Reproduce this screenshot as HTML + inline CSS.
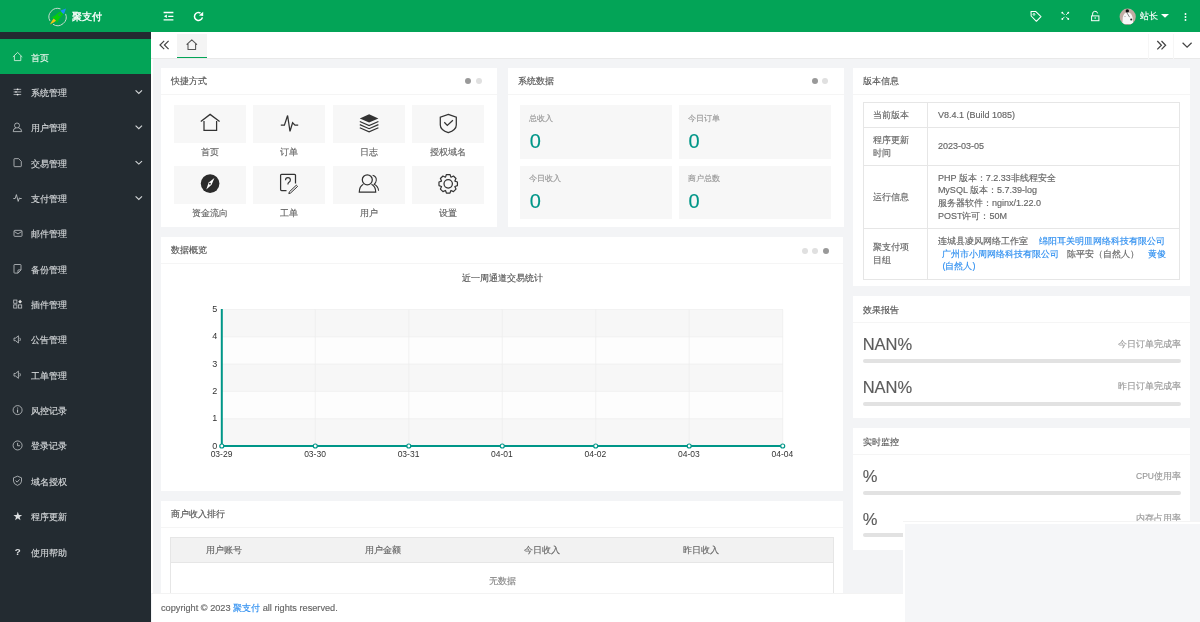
<!DOCTYPE html>
<html><head><meta charset="utf-8">
<style>
*{box-sizing:border-box;margin:0;padding:0}
html,body{width:1200px;height:622px;overflow:hidden}
body{position:relative;background:#f3f4f6;font-family:"Liberation Sans",sans-serif;color:#333}
.a{position:absolute}
.t{position:absolute;white-space:nowrap;line-height:1}
#root{-webkit-text-stroke:0.15px currentColor}
#hdr{left:0;top:0;width:1200px;height:32px;background:#03a457}
#side{left:0;top:32px;width:151px;height:590px;background:#232b31}
.mi{position:absolute;left:0;width:151px;height:35.3px}
.mi .t{left:31px;top:14.5px;font-size:9px;color:#d3d6d8}
.mi svg{position:absolute;left:12px;top:12px}
.mi .chev{left:135px;top:14px}
#tabs{left:151px;top:32px;width:1049px;height:27.3px;background:#fff;border-bottom:1px solid #e9e9e9}
.card{position:absolute;background:#fff}
.card .hd{position:absolute;left:0;top:0;right:0;height:27px;border-bottom:1px solid #f5f5f5}
.card .hd .t{left:10px;top:9.5px;font-size:9px;color:#555}
.dot{position:absolute;width:6px;height:6px;border-radius:50%;background:#e0e0e0}
.dot.on{background:#999}
.sc{position:absolute;width:72.3px;height:38px;background:#f7f7f7}
.sc svg{position:absolute}
.scl{position:absolute;font-size:9px;color:#666;line-height:1;white-space:nowrap;text-align:center;width:72.5px}
.st{position:absolute;width:152px;height:53.5px;background:#f7f7f7}
.st .l{position:absolute;left:9px;top:9.8px;font-size:7.6px;color:#999;line-height:1;white-space:nowrap}
.st .n{position:absolute;left:9.5px;top:25.5px;font-size:20px;color:#009688;line-height:1}
table.ver{position:absolute;border-collapse:collapse;font-size:9px;color:#666}
table.ver td{border:1px solid #e6e6e6;padding:0 10px 0 9.5px;line-height:12.8px}
table.ver td:first-child{padding-left:8.5px}
.bl{color:#2f8ff0}
.bar{position:absolute;height:4px;border-radius:2px;background:#e2e2e2}
</style></head><body><div id="root" style="position:absolute;left:0;top:0;width:1200px;height:622px;will-change:transform;background:#f3f4f6">
<!-- header -->
<div id="hdr" class="a">
  <svg class="a" style="left:0;top:0" width="80" height="32" viewBox="0 0 80 32">
    <path d="M65.6 13.9A8.6 8.6 0 0 1 53 24.3M49.9 20.9A8.6 8.6 0 0 1 60.5 8.9" fill="none" stroke="#c6dccd" stroke-width="1"/>
    <g transform="translate(58.1 16.4) rotate(45)">
      <path d="M0 -6.5C2.2 -6 2.6 -3 2.5 1L4 5.8L1.8 4.4L-1.8 4.4L-4 5.8L-2.5 1C-2.6 -3 -2.2 -6 0 -6.5Z" fill="#08cf0a"/>
      <path d="M0 -11.3L2.5 -5.8Q0 -4.8 -2.5 -5.8Z" fill="#1b8ff5"/>
      <circle cx="0" cy="-2" r="1.3" fill="#12a85a"/>
      <path d="M-1.7 4.6L1.7 4.6Q1.3 8 0 11.6Q-1.3 8 -1.7 4.6Z" fill="#f3c515"/>
    </g>
  </svg>
  <div class="t" style="left:72px;top:11.5px;font-size:10px;color:#fff;-webkit-text-stroke:0.35px #fff">聚支付</div>
  <!-- fold icon -->
  <svg class="a" style="left:0;top:0" width="220" height="32" viewBox="0 0 220 32">
    <path d="M163.6 12.5H173.4M168.2 16.3H173.4M163.6 19.9H173.4" stroke="#fff" stroke-width="1.3" fill="none"/>
    <path d="M166.9 14.6L163.9 16.3L166.9 18Z" fill="#fff"/>
    <path d="M202.4 17.3A4 4 0 1 1 200.5 13" stroke="#fff" stroke-width="1.5" fill="none"/>
    <path d="M203.2 11.7V16.1L198.9 15.4Z" fill="#fff"/>
  </svg>
  <!-- tag -->
  <svg class="a" style="left:1020px;top:0" width="90" height="32" viewBox="1020 0 90 32">
    <path d="M1031 11.6L1035.6 11.4L1041 16.6L1036.4 21.3L1031.2 16Z" stroke="#fff" stroke-width="1.05" fill="none" stroke-linejoin="round"/>
    <circle cx="1034" cy="14.4" r="0.9" stroke="#fff" stroke-width="0.9" fill="none"/>
    <path d="M1062.3 12.7l2.2 2.2M1068.3 12.7l-2.2 2.2M1062.3 19l2.2-2.2M1068.3 19l-2.2-2.2" stroke="#fff" stroke-width="0.9"/>
    <circle cx="1062.3" cy="12.7" r="0.9" fill="#fff"/><circle cx="1068.3" cy="12.7" r="0.9" fill="#fff"/>
    <circle cx="1062.3" cy="19" r="0.9" fill="#fff"/><circle cx="1068.3" cy="19" r="0.9" fill="#fff"/>
    <path d="M1092.6 15.8V14.2A2.5 2.5 0 0 1 1097.6 13.4" stroke="#fff" stroke-width="1" fill="none"/>
    <rect x="1091.6" y="15.9" width="7.3" height="4.8" stroke="#fff" stroke-width="1" fill="none"/>
    <circle cx="1095.2" cy="18" r="0.75" fill="#fff"/>
  </svg>
  <!-- avatar -->
  <svg class="a" style="left:1110px;top:0" width="30" height="32" viewBox="1110 0 30 32">
    <defs><clipPath id="avc"><circle cx="1127.7" cy="16.7" r="8.1"/></clipPath></defs>
    <circle cx="1127.7" cy="16.7" r="8.1" fill="#c2aca3"/>
    <g clip-path="url(#avc)">
      <path d="M1122.3 26L1122.8 17.5Q1123.5 12.6 1127.5 12.2Q1131.8 12.6 1132.6 17.5L1133.2 26Z" fill="#f7f7f7"/>
      <path d="M1122 24.2H1133.5V26H1122Z" fill="#7a5a4a"/>
    </g>
    <circle cx="1127.3" cy="10.9" r="1.7" fill="#111"/>
    <path d="M1126.8 12.6L1129.6 17.2" stroke="#333" stroke-width="0.6"/>
    <circle cx="1131.2" cy="19.6" r="1" fill="#222"/>
    <circle cx="1125" cy="16.5" r="0.6" fill="#999"/>
  </svg>
  <div class="t" style="left:1140px;top:12px;font-size:9px;color:#fff">站长</div>
  <svg class="a" style="left:1160.5px;top:14px" width="8" height="4" viewBox="0 0 8 4"><path d="M0 0H8L4 3.8Z" fill="#fff"/></svg>
  <svg class="a" style="left:1183.5px;top:12.5px" width="3" height="8" viewBox="0 0 3 8"><circle cx="1.5" cy="1" r="0.95" fill="#fff"/><circle cx="1.5" cy="4" r="0.95" fill="#fff"/><circle cx="1.5" cy="7" r="0.95" fill="#fff"/></svg>
</div>

<!-- sidebar -->
<div id="side" class="a">
<div class="a" style="left:0;top:6.8px;width:151px;height:35.3px;background:#03a457"></div>
<div class="t" style="left:31px;top:21.60px;font-size:9px;color:#e6f4ea">首页</div>
<div class="t" style="left:31px;top:56.95px;font-size:9px;color:#d3d6d8">系统管理</div>
<div class="t" style="left:31px;top:92.30px;font-size:9px;color:#d3d6d8">用户管理</div>
<div class="t" style="left:31px;top:127.65px;font-size:9px;color:#d3d6d8">交易管理</div>
<div class="t" style="left:31px;top:163.00px;font-size:9px;color:#d3d6d8">支付管理</div>
<div class="t" style="left:31px;top:198.35px;font-size:9px;color:#d3d6d8">邮件管理</div>
<div class="t" style="left:31px;top:233.70px;font-size:9px;color:#d3d6d8">备份管理</div>
<div class="t" style="left:31px;top:269.05px;font-size:9px;color:#d3d6d8">插件管理</div>
<div class="t" style="left:31px;top:304.40px;font-size:9px;color:#d3d6d8">公告管理</div>
<div class="t" style="left:31px;top:339.75px;font-size:9px;color:#d3d6d8">工单管理</div>
<div class="t" style="left:31px;top:375.10px;font-size:9px;color:#d3d6d8">风控记录</div>
<div class="t" style="left:31px;top:410.45px;font-size:9px;color:#d3d6d8">登录记录</div>
<div class="t" style="left:31px;top:445.80px;font-size:9px;color:#d3d6d8">域名授权</div>
<div class="t" style="left:31px;top:481.15px;font-size:9px;color:#d3d6d8">程序更新</div>
<div class="t" style="left:31px;top:516.50px;font-size:9px;color:#d3d6d8">使用帮助</div>
</div>
<svg class="a" style="left:0;top:0" width="151" height="622" viewBox="0 0 151 622"><path d="M12.9 57.00L17.6 52.40L22.3 57.00M14.4 55.80V60.60H20.8V55.80" stroke="#d9efe0" stroke-width="0.85" fill="none"/><path d="M13.6 89.35H21.2M13.6 91.95H21.2M13.6 94.55H21.2" stroke="#c3c6c9" stroke-width="0.8"/><circle cx="17.6" cy="89.35" r="0.9" fill="#e8e8e8"/><circle cx="16" cy="91.95" r="0.9" fill="#c3c6c9"/><circle cx="17.6" cy="94.55" r="0.9" fill="#e8e8e8"/><circle cx="17" cy="125.50" r="2.5" stroke="#c3c6c9" stroke-width="0.8" fill="none"/><path d="M13.2 131.60Q13.2 128.20 16 127.90M18.4 127.90Q21.6 128.20 21.7 131.60H13.2" stroke="#c3c6c9" stroke-width="0.8" fill="none"/><path d="M14.6 158.65H18.6L21.3 161.35V166.05Q21.3 166.65 20.7 166.65H14.6Q14 166.65 14 166.05V159.25Q14 158.65 14.6 158.65Z" stroke="#c3c6c9" stroke-width="0.8" fill="none"/><path d="M13.3 198.50H15.2L16.4 194.60L18.2 201.40L19.4 198.00L20 198.50H21.7" stroke="#c3c6c9" stroke-width="0.85" fill="none"/><rect x="14" y="230.35" width="8" height="6" rx="0.8" stroke="#c3c6c9" stroke-width="0.8" fill="none"/><path d="M14.4 231.55L18 233.95L21.6 231.55" stroke="#c3c6c9" stroke-width="0.8" fill="none"/><path d="M14.6 264.50H20.4Q21 264.50 21 265.10V269.90L18 273.10H14.6Q14 273.10 14 272.50V265.10Q14 264.50 14.6 264.50Z M18 273.10V270.30Q18 269.90 18.4 269.90H21" stroke="#c3c6c9" stroke-width="0.8" fill="none"/><rect x="13.7" y="300.05" width="3.2" height="3.2" stroke="#c3c6c9" stroke-width="0.8" fill="none"/><rect x="13.7" y="304.85" width="3.2" height="3.2" stroke="#c3c6c9" stroke-width="0.8" fill="none"/><rect x="18.5" y="304.85" width="3.2" height="3.2" stroke="#c3c6c9" stroke-width="0.8" fill="none"/><path d="M20.1 299.65L22 301.65L20.1 303.55L18.2 301.65Z" fill="#e0e0e0"/><path d="M14 338.10H15.6L18.4 335.80V343.00L15.6 340.70H14Z" stroke="#c3c6c9" stroke-width="0.8" fill="none"/><path d="M19.8 337.80Q21 339.40 19.8 341.00" stroke="#c3c6c9" stroke-width="0.8" fill="none"/><path d="M14 373.45H15.6L18.4 371.15V378.35L15.6 376.05H14Z" stroke="#c3c6c9" stroke-width="0.8" fill="none"/><path d="M19.8 373.15Q21 374.75 19.8 376.35" stroke="#c3c6c9" stroke-width="0.8" fill="none"/><circle cx="17.6" cy="410.10" r="4.5" stroke="#c3c6c9" stroke-width="0.8" fill="none"/><path d="M17.6 409.50V412.70" stroke="#c3c6c9" stroke-width="1"/><circle cx="17.6" cy="408.00" r="0.6" fill="#c3c6c9"/><circle cx="17.6" cy="445.45" r="4.5" stroke="#c3c6c9" stroke-width="0.8" fill="none"/><path d="M17.6 442.85V445.75H20" stroke="#c3c6c9" stroke-width="0.85" fill="none"/><path d="M17.5 476.20L21.5 477.80V481.20Q21.5 484.00 17.5 485.40Q13.5 484.00 13.5 481.20V477.80Z" stroke="#c3c6c9" stroke-width="0.8" fill="none"/><path d="M15.6 480.60L17.2 482.10L19.6 479.40" stroke="#c3c6c9" stroke-width="0.85" fill="none"/><path d="M17.80 511.85L18.92 514.91L22.17 515.03L19.61 517.04L20.50 520.17L17.80 518.35L15.10 520.17L15.99 517.04L13.43 515.03L16.68 514.91Z" fill="#dcdfe1"/><text x="17.8" y="555.40" font-family="Liberation Sans" font-weight="bold" font-size="9.8" fill="#dcdfe1" text-anchor="middle">?</text><path d="M135.6 90.35L138.8 93.35L142 90.35" stroke="#d3d6d8" stroke-width="1.15" fill="none"/><path d="M135.6 125.70L138.8 128.70L142 125.70" stroke="#d3d6d8" stroke-width="1.15" fill="none"/><path d="M135.6 161.05L138.8 164.05L142 161.05" stroke="#d3d6d8" stroke-width="1.15" fill="none"/><path d="M135.6 196.40L138.8 199.40L142 196.40" stroke="#d3d6d8" stroke-width="1.15" fill="none"/></svg>

<div class="a" style="left:151px;top:59px;width:2.2px;height:534px;background:#fff"></div>
<!-- tabs -->
<div id="tabs" class="a">
  <div class="a" style="left:26.3px;top:2px;width:29.5px;height:24.3px;background:#f4f4f4;border-bottom:1.5px solid #03a457"></div>
  <div class="a" style="left:996.6px;top:2px;width:1px;height:25px;background:#f6f6f6"></div>
  <div class="a" style="left:1021.7px;top:2px;width:1px;height:25px;background:#f6f6f6"></div>
</div>
<svg class="a" style="left:0;top:0" width="1200" height="60" viewBox="0 0 1200 60">
  <path d="M164.2 40.8L160 45L164.2 49.2M168.6 40.8L164.4 45L168.6 49.2" stroke="#444" stroke-width="1.2" fill="none"/>
  <path d="M186.6 44.6L191.8 39.9L197 44.6M188 43.4V49.4H195.6V43.4" stroke="#555" stroke-width="1.05" fill="none" stroke-linejoin="round"/>
  <path d="M1157.3 41L1161.4 45.2L1157.3 49.4M1161.5 41L1165.6 45.2L1161.5 49.4" stroke="#444" stroke-width="1.25" fill="none"/>
  <path d="M1182.6 42.8L1187.1 47.2L1191.6 42.8" stroke="#444" stroke-width="1.2" fill="none"/>
</svg>

<!-- card 1 shortcuts -->
<div class="card" style="left:161px;top:67.5px;width:336px;height:159px">
  <div class="hd"><div class="t">快捷方式</div></div>
  <div class="dot on" style="left:304.4px;top:10.7px"></div>
  <div class="dot" style="left:314.9px;top:10.7px"></div>
  <div class="sc" style="left:13px;top:37.5px"></div>
  <div class="sc" style="left:92px;top:37.5px"></div>
  <div class="sc" style="left:172px;top:37.5px"></div>
  <div class="sc" style="left:251px;top:37.5px"></div>
  <div class="sc" style="left:13px;top:98px"></div>
  <div class="sc" style="left:92px;top:98px"></div>
  <div class="sc" style="left:172px;top:98px"></div>
  <div class="sc" style="left:251px;top:98px"></div>
  <div class="scl" style="left:13px;top:80.5px">首页</div>
  <div class="scl" style="left:92px;top:80.5px">订单</div>
  <div class="scl" style="left:172px;top:80.5px">日志</div>
  <div class="scl" style="left:251px;top:80.5px">授权域名</div>
  <div class="scl" style="left:13px;top:141.5px">资金流向</div>
  <div class="scl" style="left:92px;top:141.5px">工单</div>
  <div class="scl" style="left:172px;top:141.5px">用户</div>
  <div class="scl" style="left:251px;top:141.5px">设置</div>
</div>


<svg class="a" style="left:0;top:0" width="1200" height="622" viewBox="0 0 1200 622">
 <g stroke="#333" stroke-width="1.25" fill="none" stroke-linejoin="miter">
  <path d="M200.8 121.6L210.1 114.4L219.6 121.6M204 121V130.3H216.6V121"/>
  <path d="M280.8 125.2H284.4L287.6 115.5L290 131.3L292.6 122.8L295 125.2H298.2"/>
  <path d="M359.8 121.5L369.1 125.6L378.4 121.5M359.8 124.6L369.1 128.7L378.4 124.6M359.8 127.7L369.1 131.8L378.4 127.7" stroke-width="1.2"/>
  <path d="M448.3 114.3L456.3 117.2V125Q456.3 130 448.3 132.6Q440.3 130 440.3 125V117.2Z"/>
  <path d="M444.3 122.3L447.3 125.4L452.9 120.2"/>
  <path d="M286.5 190.5H281.6Q280.6 190.5 280.6 189.5V175.2Q280.6 174.3 281.6 174.3H294.5Q295.5 174.3 295.5 175.2V183.4"/>
  <path d="M297.6 186.4L290.6 193L288.8 193.6L289.4 191.8L296.3 185.2Z" stroke-width="1"/>
  <path d="M285.5 180.3Q285.5 177.6 288 177.6Q290.4 177.6 290.4 180Q290.4 181.6 288.7 182.5Q287.9 183 287.9 184.6" stroke-width="1.15"/>
  <circle cx="367.3" cy="179.8" r="5"/>
  <path d="M363.3 184.3Q359.3 186.5 359.3 192.2H375.7Q375.7 186.5 371.5 184.3"/>
  <path d="M372.6 175.3Q376.6 176.5 376.3 180.3Q376 183 374.2 184.3Q378.2 186.3 378.6 190.8" stroke-width="1.05"/>
  <circle cx="448.2" cy="183.8" r="4.2"/>
 </g>
 <path d="M359.8 118.4L369.1 114.3L378.4 118.4L369.1 122.6Z" fill="#333"/>
 <circle cx="210.1" cy="183.6" r="9.3" fill="#2b2b2b"/>
 <path d="M214.4 178L211.6 184.8L206.3 189.4L208.7 182.6Z" fill="#fff"/>
 <circle cx="209.9" cy="183.7" r="0.9" fill="#2b2b2b"/>
 <path id="gear" fill="none" stroke="#333" stroke-width="1.2" stroke-linejoin="round" d="M454.88 181.10 L457.43 182.01 L457.43 185.59 L454.88 186.50 L454.83 186.61 L455.99 189.06 L453.46 191.59 L451.01 190.43 L450.90 190.48 L449.99 193.03 L446.41 193.03 L445.50 190.48 L445.39 190.43 L442.94 191.59 L440.41 189.06 L441.57 186.61 L441.52 186.50 L438.97 185.59 L438.97 182.01 L441.52 181.10 L441.57 180.99 L440.41 178.54 L442.94 176.01 L445.39 177.17 L445.50 177.12 L446.41 174.57 L449.99 174.57 L450.90 177.12 L451.01 177.17 L453.46 176.01 L455.99 178.54 L454.83 180.99Z"/>
</svg>

<!-- card 2 system data -->
<div class="card" style="left:507.5px;top:67.5px;width:336px;height:159px">
  <div class="hd"><div class="t">系统数据</div></div>
  <div class="dot on" style="left:304.4px;top:10.7px"></div>
  <div class="dot" style="left:314.9px;top:10.7px"></div>
  <div class="st" style="left:12.7px;top:37.5px"><div class="l">总收入</div><div class="n">0</div></div>
  <div class="st" style="left:171.5px;top:37.5px"><div class="l">今日订单</div><div class="n">0</div></div>
  <div class="st" style="left:12.7px;top:98px"><div class="l">今日收入</div><div class="n">0</div></div>
  <div class="st" style="left:171.5px;top:98px"><div class="l">商户总数</div><div class="n">0</div></div>
</div>

<!-- card 3 version -->
<div class="card" style="left:852.7px;top:67.5px;width:337.3px;height:218px">
  <div class="hd"><div class="t">版本信息</div></div>
  <table class="ver" style="left:10.5px;top:34.5px;width:317px">
    <tr style="height:25.3px"><td style="width:64.2px">当前版本</td><td>V8.4.1 (Build 1085)</td></tr>
    <tr style="height:38px"><td>程序更新<br>时间</td><td>2023-03-05</td></tr>
    <tr style="height:62.8px"><td>运行信息</td><td>PHP 版本：7.2.33非线程安全<br>MySQL 版本：5.7.39-log<br>服务器软件：nginx/1.22.0<br>POST许可：50M</td></tr>
    <tr style="height:51px"><td>聚支付项<br>目组</td><td style="white-space:nowrap">连城县凌风网络工作室<span class="bl" style="margin-left:11px">绵阳耳关明皿网络科技有限公司</span><br><span class="bl" style="margin-left:4.6px">广州市小周网络科技有限公司</span><span style="margin-left:7.7px">陈平安（自然人）</span><span class="bl" style="margin-left:9px">黄俊</span><br><span class="bl" style="margin-left:4.6px">(自然人)</span></td></tr>
  </table>
</div>

<!-- card chart -->
<div class="card" style="left:161px;top:237px;width:682.3px;height:254px">
  <div class="hd" style="height:26.5px"><div class="t" style="top:9px">数据概览</div></div>
  <div class="dot" style="left:641px;top:10.7px"></div>
  <div class="dot" style="left:651.3px;top:10.7px"></div>
  <div class="dot on" style="left:661.6px;top:10.7px"></div>
  <div class="t" style="left:301px;top:37px;font-size:9px;color:#555">近一周通道交易统计</div>
</div>
<svg class="a" style="left:0;top:0" width="1200" height="622" viewBox="0 0 1200 622">
  <g fill="#f7f7f7">
    <rect x="222" y="309.5" width="561" height="27.3"/>
    <rect x="222" y="364.1" width="561" height="27.3"/>
    <rect x="222" y="418.7" width="561" height="27.3"/>
  </g>
  <g fill="#fdfdfd">
    <rect x="222" y="336.8" width="561" height="27.3"/>
    <rect x="222" y="391.4" width="561" height="27.3"/>
  </g>
  <g stroke="#eeeeee" stroke-width="0.7">
    <path d="M222 336.8H783M222 364.1H783M222 391.4H783M222 418.7H783M222 309.5H783"/>
    <path d="M315.3 309.5V446M408.8 309.5V446M502.3 309.5V446M595.7 309.5V446M689.2 309.5V446M782.7 309.5V446"/>
  </g>
  <path d="M221.8 309V446H782.7" stroke="#009688" stroke-width="2" fill="none"/>
  <g fill="#fff" stroke="#009688" stroke-width="1.2">
    <circle cx="221.8" cy="446" r="2"/><circle cx="315.3" cy="446" r="2"/><circle cx="408.8" cy="446" r="2"/><circle cx="502.3" cy="446" r="2"/><circle cx="595.7" cy="446" r="2"/><circle cx="689.2" cy="446" r="2"/><circle cx="782.7" cy="446" r="2"/>
  </g>
  <g font-family="Liberation Sans" font-size="9" fill="#333" text-anchor="end"><text x="217.3" y="448.6">0</text><text x="217.3" y="421.3">1</text><text x="217.3" y="394.0">2</text><text x="217.3" y="366.6">3</text><text x="217.3" y="339.3">4</text><text x="217.3" y="312.0">5</text></g>
  <g font-family="Liberation Sans" font-size="8.5" fill="#333" text-anchor="middle"><text x="221.5" y="457.4">03-29</text><text x="315.0" y="457.4">03-30</text><text x="408.5" y="457.4">03-31</text><text x="501.9" y="457.4">04-01</text><text x="595.4" y="457.4">04-02</text><text x="688.9" y="457.4">04-03</text><text x="782.4" y="457.4">04-04</text></g>
</svg>

<!-- card 4 ranking -->
<div class="card" style="left:161px;top:500.5px;width:682.3px;height:100px">
  <div class="hd"><div class="t" style="top:9px">商户收入排行</div></div>
  <div class="a" style="left:9.4px;top:36.9px;width:663.4px;height:25.4px;background:#f2f2f2;border:1px solid #e6e6e6"></div>
  <div class="a" style="left:9.4px;top:62.3px;width:663.4px;height:40px;border:1px solid #e6e6e6;border-top:none"></div>
  <div class="t" style="left:44.8px;top:45.3px;font-size:9px;color:#666">用户账号</div>
  <div class="t" style="left:203.8px;top:45.3px;font-size:9px;color:#666">用户金额</div>
  <div class="t" style="left:362.8px;top:45.3px;font-size:9px;color:#666">今日收入</div>
  <div class="t" style="left:521.8px;top:45.3px;font-size:9px;color:#666">昨日收入</div>
  <div class="t" style="left:328px;top:76.5px;font-size:9px;color:#888">无数据</div>
</div>

<!-- card effect -->
<div class="card" style="left:852.7px;top:296px;width:337.3px;height:122.2px">
  <div class="hd"><div class="t">效果报告</div></div>
  <div class="t" style="left:10px;top:40px;font-size:16.5px;color:#5c5c5c">NAN%</div>
  <div class="t" style="right:9px;top:44px;font-size:8.5px;color:#999">今日订单完成率</div>
  <div class="bar" style="left:10.5px;top:63px;width:318px"></div>
  <div class="t" style="left:10px;top:82.5px;font-size:16.5px;color:#5c5c5c">NAN%</div>
  <div class="t" style="right:9px;top:86.2px;font-size:8.5px;color:#999">昨日订单完成率</div>
  <div class="bar" style="left:10.5px;top:105.5px;width:318px"></div>
</div>

<!-- card monitor -->
<div class="card" style="left:852.7px;top:428px;width:337.3px;height:121.5px">
  <div class="hd"><div class="t">实时监控</div></div>
  <div class="t" style="left:10px;top:40px;font-size:16.5px;color:#5c5c5c">%</div>
  <div class="t" style="right:9px;top:43.5px;font-size:8.5px;color:#999">CPU使用率</div>
  <div class="bar" style="left:10.5px;top:62.5px;width:318px"></div>
  <div class="t" style="left:10px;top:82.5px;font-size:16.5px;color:#5c5c5c">%</div>
  <div class="t" style="right:9px;top:85.5px;font-size:8.5px;color:#999">内存占用率</div>
  <div class="bar" style="left:10.5px;top:105px;width:318px"></div>
</div>

<!-- footer -->
<div class="a" style="left:152px;top:593px;width:1048px;height:29px;background:#fff;border-top:1px solid #f3f3f3"></div>
<div class="t" style="left:161px;top:603.5px;font-size:9.2px;color:#666">copyright © 2023 <span style="color:#2f8ff0">聚支付</span> all rights reserved.</div>

<!-- overlay -->
<div class="a" style="left:903px;top:521px;width:297px;height:101px;background:#fff;border-top:1px solid #f4f4f4"></div>
<div class="a" style="left:905px;top:523.9px;width:295px;height:99px;background:#f5f6f8"></div>
</div></body></html>
